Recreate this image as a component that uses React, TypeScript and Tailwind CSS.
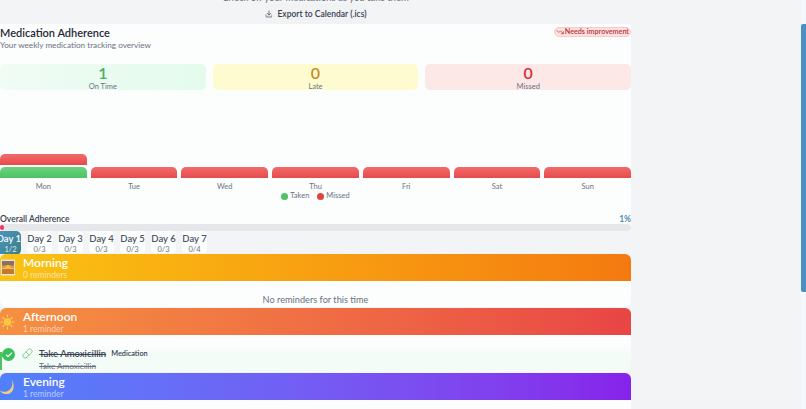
import { Check, Download, Pill, TrendingDown } from "lucide-react";

const font = { fontFamily: "Lato, 'Noto Sans', sans-serif" };

function Stat({ n, label, box, color }: { n: string; label: string; box: string; color: string }) {
  return (
    <div className={`flex h-[26px] flex-col items-center rounded-[5px] ${box}`}>
      <div className={`h-[16px] text-[16px] font-semibold leading-[17px] ${color}`}>{n}</div>
      <div className="mt-[1.5px] text-[7.5px] leading-[10px] text-[#6b7280]">{label}</div>
    </div>
  );
}

function Bar({ className }: { className: string }) {
  return <div className={`h-[11px] rounded-t-[5px] ${className}`} />;
}

const red = "bg-gradient-to-b from-[#f26a6a] to-[#e64b4b]";
const days = ["Mon", "Tue", "Wed", "Thu", "Fri", "Sat", "Sun"];
const tabs = [
  ["Day 2", "0/3"],
  ["Day 3", "0/3"],
  ["Day 4", "0/3"],
  ["Day 5", "0/3"],
  ["Day 6", "0/3"],
  ["Day 7", "0/4"],
];

function Header({ title, sub, className, icon }: { title: string; sub: string; className: string; icon: React.ReactNode }) {
  return (
    <div className={`flex h-[27px] items-center rounded-t-[6px] ${className}`}>
      <div className="flex w-[23px] shrink-0 justify-start">{icon}</div>
      <div className="flex flex-col">
        <div className="text-[12px] font-semibold leading-[15px] text-white">{title}</div>
        <div className="text-[8.5px] leading-[11px] text-white/60">{sub}</div>
      </div>
    </div>
  );
}

export default function App() {
  return (
    <div style={font} className="flex h-[409px] w-[806px] overflow-hidden bg-[#f3f4f6]">
      <div className="w-[631px] shrink-0">
        <div className="flex h-[24px] flex-col items-center justify-end overflow-hidden">
          <div className="mb-[1.5px] whitespace-nowrap text-[9.5px] leading-[10px] text-[#6b7280]">Check off your medications as you take them</div>
          <div className="flex h-[20px] w-[102px] shrink-0 items-center justify-center gap-[5px] rounded-[3px] bg-[#f1f2f4] text-[8.5px] font-semibold text-[#374151]">
            <Download size={10} strokeWidth={2} />
            <span className="whitespace-nowrap">Export to Calendar (.ics)</span>
          </div>
        </div>

        <div className="bg-[#fcfdfd]">
          <div className="flex h-[40px] justify-between">
            <div>
              <div className="pt-[2px] text-[11px] font-semibold leading-[13px] text-[#1f2937]">Medication Adherence</div>
              <div className="mt-[1px] text-[8.2px] leading-[11px] text-[#6b7280]">Your weekly medication tracking overview</div>
            </div>
            <div className="mt-[3px] flex h-[10px] items-center gap-[1px] rounded-full border-[0.5px] border-[#f9caca] bg-[#fde2e2] px-[1px] text-[7.2px] font-semibold text-[#c22f2f]">
              <TrendingDown size={8} strokeWidth={2} />
              <span className="whitespace-nowrap">Needs improvement</span>
            </div>
          </div>

          <div className="grid grid-cols-3 gap-[7px]">
            <Stat n="1" label="On Time" box="bg-gradient-to-r from-[#f0fcf4] to-[#e4fbec]" color="text-[#4bad5f]" />
            <Stat n="0" label="Late" box="bg-[#fefbd0]" color="text-[#ca8a20]" />
            <Stat n="0" label="Missed" box="bg-[#fde8e8]" color="text-[#d92d33]" />
          </div>

          <div className="grid h-[88px] grid-cols-7 items-end gap-x-[4px]">
            <div className="flex flex-col gap-[2px]">
              <Bar className={red} />
              <Bar className="bg-gradient-to-b from-[#6ad47c] to-[#4fc264]" />
            </div>
            {days.slice(1).map((d) => (
              <Bar key={d} className={red} />
            ))}
          </div>

          <div className="grid h-[13px] grid-cols-7 items-end gap-x-[4px] text-center text-[7.5px] leading-[9px] text-[#6b7280]">
            {days.map((d) => (
              <div key={d}>{d}</div>
            ))}
          </div>

          <div className="flex h-[10px] items-center justify-center gap-[8px] text-[7.5px] text-[#6b7280]">
            <div className="flex items-center gap-[2px]">
              <span className="h-[7px] w-[7px] rounded-full bg-[#4fc264]" />Taken
            </div>
            <div className="flex items-center gap-[2px]">
              <span className="h-[7px] w-[7px] rounded-full bg-[#e64040]" />Missed
            </div>
          </div>

          <div className="flex h-[23px] items-end justify-between text-[8.5px] leading-[10px]">
            <span className="font-semibold text-[#374151]">Overall Adherence</span>
            <span className="font-semibold text-[#3f7cae]">1%</span>
          </div>

          <div className="relative h-[7px] rounded-full bg-[#e5e7eb]">
            <div className="absolute left-0 top-[1px] h-[5px] w-[4px] rounded-full bg-[#ec3a66]" />
          </div>
        </div>

        <div className="flex h-[23px] items-start overflow-hidden">
          <div className="flex h-[24px] w-[21px] shrink-0 flex-col items-end overflow-hidden rounded-r-[5px] bg-gradient-to-br from-[#4b93bd] to-[#3a7f86] text-white">
            <div className="whitespace-nowrap pt-[1px] text-[9.5px] font-semibold leading-[14px]">Day 1</div>
            <div className="w-[21px] text-center text-[7.5px] leading-[8px] text-white/80">1/2</div>
          </div>
          <div className="flex gap-[6px] pl-[6px]">
            {tabs.map(([a, b]) => (
              <div key={a} className="flex h-[22px] w-[25px] flex-col items-center rounded-[4px] bg-[#fcfdfd]">
                <div className="whitespace-nowrap pt-[1px] text-[9.5px] font-semibold leading-[14px] text-[#4b5563]">{a}</div>
                <div className="text-[7.5px] leading-[8px] text-[#6b7280]">{b}</div>
              </div>
            ))}
          </div>
        </div>

        <Header
          title="Morning"
          sub="0 reminders"
          className="bg-gradient-to-r from-[#f9c312] to-[#f47a10]"
          icon={
            <svg width="16" height="17" viewBox="0 0 16 17">
              <rect x="1" y="0.5" width="14" height="16" fill="#dfe3dc" />
              <rect x="2" y="2" width="12" height="5" fill="#8a6f6a" />
              <rect x="2" y="6.5" width="12" height="3" fill="#e8953c" />
              <circle cx="8" cy="8.5" r="2.6" fill="#fbc02d" />
              <rect x="2" y="10" width="12" height="5" fill="#c47a2e" />
            </svg>
          }
        />
        <div className="mb-[1px] flex h-[26px] items-end justify-center rounded-b-[7px] bg-[#fcfdfd] pb-[1px] text-[9.2px] leading-[12px] text-[#6b7280]">
          No reminders for this time
        </div>

        <Header
          title="Afternoon"
          sub="1 reminder"
          className="bg-gradient-to-r from-[#f59040] to-[#e84545]"
          icon={
            <svg width="15" height="16" viewBox="0 0 15 16">
              <circle cx="7.5" cy="8" r="3.8" fill="#f9c83c" />
              <g stroke="#f9d76a" strokeWidth="1.1" strokeLinecap="round">
                <path d="M7.5 1v1.6M7.5 13.4V15M1 8h1.6M12.4 8H14M3 3.5l1.1 1.1M10.9 11.4 12 12.5M3 12.5l1.1-1.1M10.9 4.6 12 3.5" />
              </g>
            </svg>
          }
        />
        <div className="mb-[1px] h-[37px] rounded-b-[7px] bg-gradient-to-b from-[#fcfdfd] from-30% to-[#f3fcf6] to-50%">
          <div className="relative flex h-[37px] items-start pt-[13px]">
            <svg width="6" height="22" viewBox="0 0 6 22" className="absolute left-0 top-[13px]">
              <path d="M1 22V4M1 8c2 0 3-1 4-3" stroke="#4fc264" strokeWidth="2" fill="none" />
            </svg>
            <div className="relative ml-[2px] flex h-[13px] w-[13px] shrink-0 items-center justify-center rounded-full bg-[#3bbf5a]">
              <Check size={8} strokeWidth={3.5} color="#fff" />
            </div>
            <Pill size={11} strokeWidth={1.4} color="#4bb063" className="ml-[7px] shrink-0" />
            <div className="ml-[6px]">
              <div className="flex items-center gap-[5px]">
                <span className="text-[9.5px] font-semibold leading-[12px] text-[#374151] line-through">Take Amoxicillin</span>
                <span className="text-[7.3px] font-semibold leading-[12px] text-[#374151]">Medication</span>
              </div>
              <div className="text-[8.2px] leading-[12px] text-[#6b7280] line-through">Take Amoxicillin</div>
            </div>
          </div>
        </div>

        <Header
          title="Evening"
          sub="1 reminder"
          className="bg-gradient-to-r from-[#4f81fb] to-[#8722ea]"
          icon={
            <svg width="17" height="17" viewBox="0 0 17 17">
              <path d="M11.5 1c2 5 .5 11-5 12.5C4 14.2 2 13.6 0 12.5c1.5 3 5 4 8 3.5 5-.8 8-7.5 3.5-15z" fill="#f0cf7a" />
            </svg>
          }
        />
        <div className="h-[9px] bg-[#fcfdfd]" />
      </div>

      <div className="grow" />
      <div className="h-full w-[5px] bg-[#f4f8fd] pt-[24px]">
        <div className="h-[268px] rounded-l-[2px] bg-[#4a90c4]" />
      </div>
    </div>
  );
}
